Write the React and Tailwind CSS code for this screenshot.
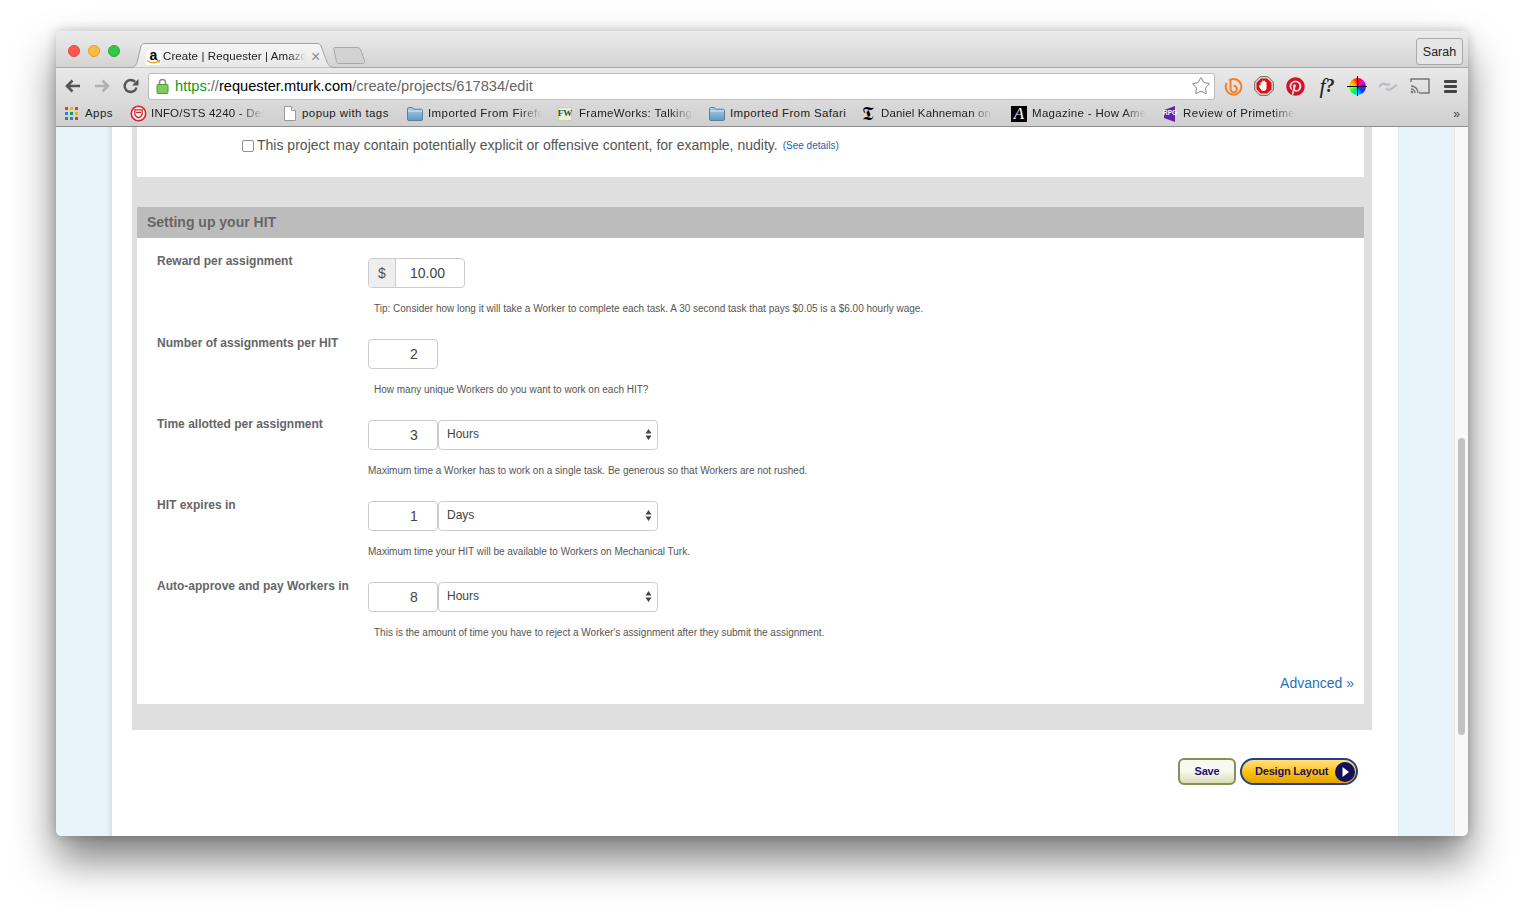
import { Star } from "lucide-react";
import { FaPinterest } from "react-icons/fa";

function Light({ color }) {
  return <div className={`w-3 h-3 rounded-full border ${color}`} />;
}

function AppsIcon() {
  const cells = ["bg-[#e33b2e]", "bg-[#f4b400]", "bg-[#e33b2e]", "bg-[#3b78e7]", "bg-[#0f9d58]", "bg-[#f4b400]", "bg-[#0f9d58]", "bg-[#3b78e7]", "bg-[#e33b2e]"];
  return (
    <div className="grid grid-cols-3 gap-[2px] w-[13px] h-[13px]">
      {cells.map((c, i) => (
        <div key={i} className={c} />
      ))}
    </div>
  );
}

function ShieldIcon() {
  return (
    <svg width="17" height="17" viewBox="0 0 17 17">
      <circle cx="8.5" cy="8.5" r="7.2" fill="#fff" stroke="#d8232a" strokeWidth="1.6" />
      <path d="M4.8 4.8h7.4v4c0 2-1.8 3.2-3.7 4-1.9-.8-3.7-2-3.7-4z" fill="none" stroke="#d8232a" strokeWidth="1.3" />
      <path d="M6 7.4h5" stroke="#d8232a" strokeWidth="1.2" />
    </svg>
  );
}

function DocIcon() {
  return (
    <svg width="12" height="15" viewBox="0 0 12 15">
      <path d="M.5.5h7l4 4v10H.5z" fill="#fff" stroke="#9a9a9a" />
      <path d="M7.5.5v4h4" fill="#eee" stroke="#9a9a9a" />
    </svg>
  );
}

function FolderIcon() {
  return (
    <svg width="16" height="14" viewBox="0 0 16 14">
      <defs>
        <linearGradient id="folderFill" x1="0" y1="0" x2="0" y2="1">
          <stop offset="0" stopColor="#a9cde6" />
          <stop offset="1" stopColor="#5f9bc6" />
        </linearGradient>
      </defs>
      <path d="M.5 2c0-.8.5-1.5 1.3-1.5h3.6l1.4 1.7h7.4c.8 0 1.3.5 1.3 1.3v8.7c0 .8-.5 1.3-1.3 1.3H1.8C1 13.5.5 13 .5 12.2z" fill="url(#folderFill)" stroke="#5d7f99" />
      <path d="M1 4h14" stroke="#d6e8f4" />
    </svg>
  );
}

function RpgIcon() {
  return (
    <div className="relative w-[16px] h-[16px] flex items-center justify-center">
      <svg className="absolute inset-0" width="16" height="16" viewBox="0 0 16 16">
        <path d="M2 4l11-4v16L2 12z" fill="#6a1fb0" />
      </svg>
      <span className="relative text-[6.5px] leading-none font-bold text-white">RPG</span>
    </div>
  );
}

const fade = "[mask-image:linear-gradient(to_right,black_80%,transparent_100%)]";

const bookmarks = [
  { icon: <AppsIcon />, label: "Apps", box: "w-[20px]", text: "w-[28px] tracking-[0.42px]", gap: "ml-0" },
  { icon: <ShieldIcon />, label: "INFO/STS 4240 - Design", box: "w-[21px]", text: `w-[113px] tracking-[0.2px] ${fade}`, gap: "ml-[17px]" },
  { icon: <DocIcon />, label: "popup with tags", box: "w-[18px]", text: "w-[89px] tracking-[0.42px]", gap: "ml-[20px]" },
  { icon: <FolderIcon />, label: "Imported From Firefox", box: "w-[21px]", text: `w-[114px] tracking-[0.42px] ${fade}`, gap: "ml-[16px]" },
  { icon: <span className="flex w-[14px] h-[14px] items-center justify-center bg-[#e8efdc] border border-[#c4d0b0] text-[9px] font-bold text-[#33552a] font-['Liberation_Serif',serif]">FW</span>, label: "FrameWorks: Talking", box: "w-[21px]", text: `w-[114px] tracking-[0.3px] ${fade}`, gap: "ml-[16px]" },
  { icon: <FolderIcon />, label: "Imported From Safari", box: "w-[21px]", text: "w-[116px] tracking-[0.38px]", gap: "ml-[16px]" },
  { icon: <span className="text-[19px] leading-none text-black font-['DejaVu_Sans',serif]">𝕿</span>, label: "Daniel Kahneman on", box: "w-[19px]", text: `w-[112px] tracking-[0.15px] ${fade}`, gap: "ml-[16px]" },
  { icon: <span className="flex w-[16px] h-[16px] items-center justify-center bg-black text-[17px] leading-none italic text-white font-['Liberation_Serif',serif]">A</span>, label: "Magazine - How America", box: "w-[21px]", text: `w-[114px] tracking-[0.3px] ${fade}`, gap: "ml-[18px]" },
  { icon: <RpgIcon />, label: "Review of Primetime", box: "w-[21px]", text: `w-[112px] tracking-[0.35px] ${fade}`, gap: "ml-[16px]" },
];

function Bookmark({ item }) {
  return (
    <div className={`flex items-center shrink-0 ${item.gap}`}>
      <div className={`flex items-center shrink-0 ${item.box}`}>{item.icon}</div>
      <span className={`block overflow-hidden whitespace-nowrap text-[11.5px] text-[#222] ${item.text}`}>{item.label}</span>
    </div>
  );
}

function BrowserChrome() {
  return (
    <div className="shrink-0">
      <div className="relative flex items-end h-[37px] pl-[12px] rounded-t-[6px] border-b border-[#a6a6a6] bg-gradient-to-b from-[#ececec] to-[#d3d3d3]">
        <div className="flex gap-2 self-start mt-[14px] mr-[12px]">
          <Light color="bg-[#fc5753] border-[#df4744]" />
          <Light color="bg-[#fdbc40] border-[#de9f34]" />
          <Light color="bg-[#33c748] border-[#27aa35]" />
        </div>
        <div className="relative w-[206px] h-[25px] -mb-px ml-[-2px] shrink-0">
          <svg className="absolute inset-0" width="206" height="25" viewBox="0 0 206 25">
            <defs>
              <linearGradient id="tabFill" x1="0" y1="0" x2="0" y2="1">
                <stop offset="0" stopColor="#f5f5f5" />
                <stop offset="1" stopColor="#e8e8e8" />
              </linearGradient>
            </defs>
            <path d="M0 24.5c4 0 5-1 7-5L11 3c1-2 2-2.5 4-2.5h172c2 0 3 .5 4 2.5l6 16c2 4 3 5.5 8 5.5" fill="url(#tabFill)" stroke="#a3a3a3" />
          </svg>
          <div className="absolute left-[16px] top-[5px] flex items-center h-[18px]">
            <div className="relative flex justify-center w-[15px] h-[15px] bg-white rounded-[2px]">
              <span className="text-[14px] leading-[11px] font-bold text-black">a</span>
              <svg className="absolute left-0 bottom-0" width="15" height="6" viewBox="0 0 15 6">
                <path d="M1 1.5c4 3 8 3 12 .5M11 1.5l2.5 .2-.6 2" fill="none" stroke="#f29a1f" strokeWidth="1.3" />
              </svg>
            </div>
            <span className="block ml-[2px] w-[143px] overflow-hidden whitespace-nowrap text-[11.5px] text-[#222] tracking-[0.1px] [mask-image:linear-gradient(to_right,black_88%,transparent_100%)]">Create | Requester | Amazon</span>
            <span className="ml-[5px] text-[16px] leading-none text-[#8d8d8d]">×</span>
          </div>
        </div>
        <svg className="shrink-0 mb-[3px] -ml-[3px]" width="33" height="17" viewBox="0 0 33 17">
          <path d="M1.5.5h23c1.5 0 2 .5 3 2l4 11c.5 1.5 0 3-2 3H6c-1.5 0-2-.5-2.5-2L.8 2c-.3-1 0-1.5.7-1.5z" fill="#d2d2d2" stroke="#a8a8a8" />
        </svg>
        <button className="absolute right-[5px] top-[7px] w-[47px] h-[27px] pt-[1px] border border-[#a9a9a9] rounded-[3px] bg-[#e6e6e6] text-[12.5px] text-[#222]">Sarah</button>
      </div>

      <div className="bg-gradient-to-b from-[#e9e9e9] to-[#cfcfcf] border-b border-[#8e8e8e]">
        <div className="flex items-center h-[33px] pt-[3px]">
          <div className="flex items-center gap-[13px] pl-[9px] w-[92px] shrink-0">
            <svg width="16" height="14" viewBox="0 0 16 14">
              <path d="M15 7H3M7.5 1.5 2 7l5.5 5.5" fill="none" stroke="#555" strokeWidth="2.6" />
            </svg>
            <svg width="16" height="14" viewBox="0 0 16 14">
              <path d="M1 7h12M8.5 1.5 14 7l-5.5 5.5" fill="none" stroke="#b1b1b1" strokeWidth="2.6" />
            </svg>
            <svg width="16" height="16" viewBox="0 0 16 16">
              <path d="M13.5 9.5a6 6 0 1 1-1.4-5.6" fill="none" stroke="#555" strokeWidth="2.4" />
              <path d="M15.5 1v6.5H9z" fill="#555" />
            </svg>
          </div>
          <div className="flex items-center w-[1067px] h-[27px] pl-[7px] pr-[2px] bg-white border border-[#bcbcbc] rounded-[3px] shrink-0">
            <svg width="13" height="16" viewBox="0 0 13 16">
              <path d="M3.5 7V4.5a3 3 0 0 1 6 0V7" fill="none" stroke="#8a8a8a" strokeWidth="1.5" />
              <rect x="1" y="6.5" width="11" height="9" rx="1" fill="#7ecb62" stroke="#4d9a38" />
            </svg>
            <span className="ml-[6px] text-[14.63px] leading-none whitespace-nowrap text-[#666]">
              <span className="text-[#0a9a1f]">https</span>://<span className="text-black">requester.mturk.com</span>/create/projects/617834/edit
            </span>
            <Star className="ml-auto mr-[1px]" size={20} strokeWidth={1.1} color="#777" />
          </div>
          <div className="flex items-center flex-1 pl-[8px]">
            <div className="flex items-center justify-center w-[20px]">
              <svg width="19" height="19" viewBox="0 0 19 19">
                <path d="M5 3.5a7.8 7.8 0 1 1-2.3 2.6" fill="none" stroke="#f58025" strokeWidth="2" />
                <path d="M6.5 2.5V12a3.2 3.2 0 1 0 3.2-3.2" fill="none" stroke="#f58025" strokeWidth="2" />
              </svg>
            </div>
            <div className="flex items-center justify-center w-[20px] ml-[11px]">
              <svg width="20" height="20" viewBox="0 0 20 20">
                <path d="M6 .7h8L19.3 6v8L14 19.3H6L.7 14V6z" fill="#ddd" stroke="#666" />
                <path d="M6.8 2.5h6.4l4.3 4.3v6.4l-4.3 4.3H6.8l-4.3-4.3V6.8z" fill="#e30d0d" />
                <path d="M6.5 9.5V6.5a1 1 0 0 1 1.5 0V5a1 1 0 0 1 1.5 0 1 1 0 0 1 1.5 0V6a1 1 0 0 1 1.5 .3V12c0 2-1 3-3 3-1.5 0-2.3-.7-3-2L5 10.5c-.3-.8.8-1.5 1.5-1z" fill="#fff" />
              </svg>
            </div>
            <div className="flex items-center justify-center w-[20px] ml-[11px]">
              <FaPinterest size={19} color="#d8112a" />
            </div>
            <div className="flex items-center justify-center w-[24px] ml-[10px] font-['Liberation_Serif',serif] italic text-[22px] leading-none text-[#222]">
              f<span className="font-bold text-[18px]">?</span>
            </div>
            <div className="relative w-[20px] h-[20px] ml-[8px] flex items-center justify-center">
              <div className="w-[17px] h-[17px] rounded-full bg-[conic-gradient(#ff0000,#ff00d0,#7a00ff,#0040ff,#00d0ff,#00ff40,#c8ff00,#ffa000,#ff0000)]" />
              <div className="absolute left-0 right-0 top-[9.5px] h-px bg-black" />
              <div className="absolute top-0 bottom-0 left-[9.5px] w-px bg-black" />
            </div>
            <div className="flex items-center justify-center w-[20px] ml-[11px]">
              <svg width="20" height="12" viewBox="0 0 20 12">
                <path d="M1 7c2-3 4-4 6-3 2 1 3 1.5 5 0M8 9c2 1 4 1 6-.5 2-1.5 3-3 5-3.5" fill="none" stroke="#bcbcc4" strokeWidth="2.2" />
              </svg>
            </div>
            <div className="flex items-center justify-center w-[20px] ml-[12px]">
              <svg width="20" height="16" viewBox="0 0 20 16">
                <path d="M1 4V1h18v14H9" fill="none" stroke="#777" strokeWidth="1.5" />
                <path d="M1 8a7 7 0 0 1 7 7M1 11a4 4 0 0 1 4 4" fill="none" stroke="#777" strokeWidth="1.5" />
                <circle cx="2" cy="14" r="1.3" fill="#777" />
              </svg>
            </div>
            <div className="flex flex-col gap-[2px] w-[13px] ml-[14px]">
              <div className="h-[3px] bg-[#444] rounded-[1px]" />
              <div className="h-[3px] bg-[#444] rounded-[1px]" />
              <div className="h-[3px] bg-[#444] rounded-[1px]" />
            </div>
          </div>
        </div>
        <div className="flex items-center h-[25px] pl-[9px]">
          {bookmarks.map((b) => (
            <Bookmark key={b.label} item={b} />
          ))}
          <span className="ml-auto mr-[8px] text-[12px] leading-none text-[#444]">»</span>
        </div>
      </div>
    </div>
  );
}

function Arrows() {
  return (
    <svg className="absolute right-[6px] top-[9px] pointer-events-none" width="7" height="11" viewBox="0 0 7 11">
      <path d="M3.5 0 6.5 4.5h-6zM3.5 11 .5 6.5h6z" fill="#444" />
    </svg>
  );
}

function Row({ label, value, unit, tip, tipInset }) {
  return (
    <div className="flex h-[81px]">
      <div className="w-[211px] shrink-0 -mt-[3px] text-[12px] leading-[14px] font-bold text-[#666]">{label}</div>
      <div className="flex-1">
        <div className="flex h-[30px]">
          <input readOnly value={value} className="w-[70px] h-[30px] pl-[41px] border border-[#cccccc] rounded-[4px] bg-white text-[14px] text-[#444] outline-none" />
          {unit && (
            <div className="relative w-[220px] h-[30px]">
              <select defaultValue={unit} className="appearance-none w-full h-full pl-[8px] pb-[2px] border border-[#cccccc] rounded-[4px] bg-white text-[12px] text-[#444] outline-none">
                <option>{unit}</option>
              </select>
              <Arrows />
            </div>
          )}
        </div>
        <p className={`mt-[14px] text-[10px] leading-[13px] whitespace-nowrap text-[#555] ${tipInset ? "pl-[6px]" : ""}`}>{tip}</p>
      </div>
    </div>
  );
}

export default function App() {
  return (
    <div className="w-[1524px] h-[916px] overflow-hidden bg-white pt-[31px] pl-[56px] font-['Liberation_Sans',sans-serif]">
      <div className="flex flex-col w-[1412px] h-[805px] rounded-[6px] shadow-[0_24px_42px_rgba(0,0,0,0.5),0_0_12px_rgba(0,0,0,0.22)] overflow-hidden">
        <BrowserChrome />
        <div className="flex flex-1 min-h-0 bg-[#e7f4fa]">
          <div className="w-[56px] shrink-0 bg-gradient-to-r from-[#e7f4fa] from-90% to-[#d6e2e8]" />
          <div className="flex flex-col w-[1286px] shrink-0 bg-white pl-[20px]">
            <div className="w-[1240px] pl-[5px] pr-[8px] bg-[#dfdfdf]">
              <div className="flex items-center h-[50px] pb-[13px] pl-[105px] bg-white">
                <input type="checkbox" readOnly className="appearance-none w-[12px] h-[12px] mr-[3px] border border-[#8f8f8f] rounded-[2px] bg-white" />
                <span className="text-[14.03px] text-[#555]">This project may contain potentially explicit or offensive content, for example, nudity.</span>
                <a className="ml-[5px] text-[10px] text-[#1f5fae]">(See details)</a>
              </div>
              <div className="h-[30px]" />
              <div className="flex items-center h-[31px] pl-[10px] bg-[#bcbcbc] text-[14px] font-bold text-[#666]">Setting up your HIT</div>
              <div className="bg-white pt-[20px] pl-[20px] h-[466px]">
                <div className="flex h-[81px]">
                  <div className="w-[211px] shrink-0 -mt-[4px] text-[12px] leading-[14px] font-bold text-[#666]">Reward per assignment</div>
                  <div className="flex-1">
                    <div className="flex w-[97px] h-[30px] border border-[#cccccc] rounded-[4px] overflow-hidden">
                      <div className="flex items-center justify-center w-[27px] border-r border-[#cccccc] bg-[#eeeeee] text-[14px] text-[#555]">$</div>
                      <div className="flex items-center pl-[14px] text-[14px] text-[#444]">10.00</div>
                    </div>
                    <p className="mt-[14px] pl-[6px] text-[10px] leading-[13px] whitespace-nowrap text-[#555]">Tip: Consider how long it will take a Worker to complete each task. A 30 second task that pays $0.05 is a $6.00 hourly wage.</p>
                  </div>
                </div>
                <Row label="Number of assignments per HIT" value="2" tip="How many unique Workers do you want to work on each HIT?" tipInset />
                <Row label="Time allotted per assignment" value="3" unit="Hours" tip="Maximum time a Worker has to work on a single task. Be generous so that Workers are not rushed." />
                <Row label="HIT expires in" value="1" unit="Days" tip="Maximum time your HIT will be available to Workers on Mechanical Turk." />
                <Row label="Auto-approve and pay Workers in" value="8" unit="Hours" tip="This is the amount of time you have to reject a Worker's assignment after they submit the assignment." tipInset />
                <div className="flex justify-end pr-[10px] mt-[11px]">
                  <a className="text-[14px] leading-[18px] text-[#1f6fb8]">Advanced »</a>
                </div>
              </div>
              <div className="h-[26px]" />
            </div>
            <div className="flex justify-end gap-[4px] pt-[28px] pr-[40px] text-[11px] tracking-[-0.2px] font-bold text-[#1d1070] whitespace-nowrap">
              <button className="w-[58px] h-[27px] border-2 border-[#8b8c5c] rounded-[6px] bg-gradient-to-b from-[#f7f8ee] from-50% to-[#d8dcb4]">Save</button>
              <button className="flex items-center w-[118px] h-[27px] pl-[13px] border-2 border-[#23408f] rounded-full bg-gradient-to-b from-[#ffe07a] via-[#ffc400] to-[#e2a400]">
                Design Layout
                <div className="flex items-center justify-center w-[20px] h-[20px] ml-auto mr-[1px] rounded-full bg-[#14105a]">
                  <svg width="7" height="10" viewBox="0 0 7 10">
                    <path d="M.5 0 7 5 .5 10z" fill="#fff" />
                  </svg>
                </div>
              </button>
            </div>
          </div>
          <div className="w-[56px] shrink-0 border-l border-[#dcecf3]" />
          <div className="flex flex-col w-[14px] shrink-0 px-[3px] pt-[311px] pb-[101px] bg-[#f8f8f8] border-l border-[#e8e8e8]">
            <div className="flex-1 rounded-full bg-[#c2c2c2]" />
          </div>
        </div>
      </div>
    </div>
  );
}
